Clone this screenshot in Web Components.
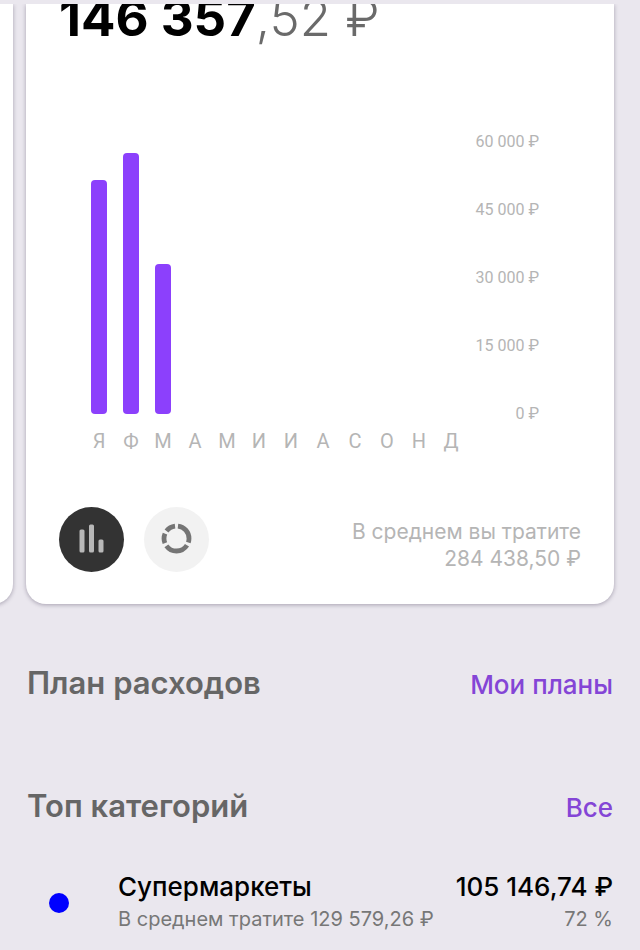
<!DOCTYPE html>
<html lang="ru">
<head>
<meta charset="utf-8">
<meta name="viewport" content="width=device-width, initial-scale=1">
<title>Расходы</title>
<style>
    body {
        margin: 0;
        background-color: #EAE7EE;
        font-family: Inter, "Noto Sans", sans-serif;
        color: #000000;
    }
</style>
</head>
<body>
<expenses-page></expenses-page>

<template id="page-template">
    <style>
        :host {
            display: block;
            padding-top: 4px;
            overflow: hidden;
        }

        .cards {
            display: flex;
            justify-content: flex-end;
            gap: 13px;
            padding: 0 26px 21px;
            overflow: hidden;
        }

        expense-card {
            flex: 0 0 100%;
        }

        main {
            padding: 0 27px;
        }
    </style>
    <div class="cards">
        <expense-card></expense-card>
        <expense-card>
            <money-amount slot="amount" whole="146 357" cents=",52 ₽"></money-amount>
            <bar-chart slot="chart" max="60000" values="51700,57600,33000"></bar-chart>
            <chart-switch slot="switch"></chart-switch>
            <span slot="average">В среднем вы тратите<br>284 438,50 ₽</span>
        </expense-card>
    </div>
    <main>
        <section-head href="#plans">План расходов<span slot="link">Мои планы</span></section-head>
        <section-head href="#categories">Топ категорий<span slot="link">Все</span></section-head>
        <category-row>
            <span slot="name">Супермаркеты</span>
            <span slot="sum">105 146,74 ₽</span>
            <span slot="note">В среднем тратите 129 579,26 ₽</span>
            <span slot="share">72 %</span>
        </category-row>
    </main>
</template>

<template id="card-template">
    <style>
        :host {
            display: flex;
            flex-flow: column nowrap;
            box-sizing: border-box;
            padding-bottom: 32px;
            background-color: #FFFFFF;
            border-radius: 0 0 20px 20px;
            box-shadow: 0 1px 4px rgba(40, 30, 60, 0.35);
        }

        .foot {
            display: flex;
            justify-content: space-between;
            align-items: center;
            margin-top: 53px;
            padding: 0 33px;
        }

        .average {
            margin-top: 12px;
            font-size: 21px;
            line-height: 27px;
            text-align: right;
            color: #B5B5B5;
        }
    </style>
    <slot name="amount"></slot>
    <slot name="chart"></slot>
    <div class="foot">
        <slot name="switch"></slot>
        <div class="average"><slot name="average"></slot></div>
    </div>
</template>

<template id="amount-template">
    <style>
        :host {
            display: flex;
            align-items: flex-end;
            height: 42px;
            padding-left: 33px;
            overflow: hidden;
            font-size: 51px;
            line-height: 56px;
            white-space: nowrap;
        }

        .whole {
            font-weight: 700;
        }

        .cents {
            font-weight: 300;
            color: #6A6A6A;
        }
    </style>
    <span class="whole"></span><span class="cents"></span>
</template>

<template id="chart-template">
    <style>
        :host {
            display: grid;
            grid-template-columns: 1fr 72px;
            margin-top: 86px;
            padding: 0 75px 0 57px;
            font-family: Roboto, sans-serif;
            color: #B5B5B5;
        }

        .bars, .months {
            display: grid;
            grid-template-columns: repeat(12, 1fr);
            justify-items: center;
        }

        .bars {
            height: 272px;
            margin: 10px 0;
            align-items: end;
        }

        .bar {
            width: 16px;
            border-radius: 4px;
            background-color: #8C40FC;
        }

        .months {
            margin-top: 5px;
            font-size: 20px;
            line-height: 24px;
        }

        .axis {
            display: flex;
            flex-flow: column nowrap;
            justify-content: space-between;
            text-align: right;
            font-size: 16px;
            line-height: 20px;
        }
    </style>
    <div class="bars"></div>
    <div class="axis"></div>
    <div class="months"></div>
</template>

<template id="switch-template">
    <style>
        :host {
            display: flex;
            gap: 20px;
        }

        button {
            width: 65px;
            height: 65px;
            padding: 0;
            border: none;
            border-radius: 50%;
            background-color: #F2F2F2;
            color: #757575;
            cursor: pointer;
        }

        button[aria-pressed="true"] {
            background-color: #333333;
            color: #B8B8B8;
        }

        svg {
            display: block;
            margin: auto;
        }
    </style>
    <button type="button" aria-label="Столбцы" aria-pressed="true">
        <svg width="32" height="32" viewBox="0 0 32 32" fill="currentColor">
            <rect x="3.5" y="6.5" width="5" height="23" rx="1.5"/>
            <rect x="13" y="1.5" width="5" height="28" rx="1.5"/>
            <rect x="22.5" y="16.5" width="5" height="13" rx="1.5"/>
        </svg>
    </button>
    <button type="button" aria-label="Круг" aria-pressed="false">
        <svg width="32" height="32" viewBox="0 0 32 32">
            <circle cx="15.5" cy="15.5" r="12.5" fill="none" stroke="currentColor" stroke-width="4.8"
                pathLength="360" stroke-dasharray="0 7 102 14 111 14 45 14 46 7" transform="rotate(-90 15.5 15.5)"/>
        </svg>
    </button>
</template>

<template id="head-template">
    <style>
        :host {
            display: flex;
            justify-content: space-between;
            align-items: baseline;
            height: 40px;
            padding: 38px 0 45px;
            line-height: 40px;
        }

        h2 {
            margin: 0;
            font-size: 31px;
            font-weight: 600;
            color: #666666;
        }

        a {
            font-size: 26px;
            font-weight: 500;
            color: #8445D6;
            text-decoration: none;
        }
    </style>
    <h2><slot></slot></h2>
    <a><slot name="link"></slot></a>
</template>

<template id="row-template">
    <style>
        :host {
            display: grid;
            grid-template-columns: 91px 1fr auto;
            align-items: center;
            line-height: 32px;
            white-space: nowrap;
        }

        .dot {
            grid-row: span 2;
            width: 20px;
            height: 20px;
            margin-left: 22px;
            border-radius: 50%;
            background-color: #0000FF;
        }

        .main {
            font-size: 26px;
            font-weight: 500;
        }

        .small {
            font-size: 20px;
            color: #777777;
        }

        .right {
            text-align: right;
        }
    </style>
    <div class="dot"></div>
    <div class="main"><slot name="name"></slot></div>
    <div class="main right"><slot name="sum"></slot></div>
    <div class="small"><slot name="note"></slot></div>
    <div class="small right"><slot name="share"></slot></div>
</template>

<script>
class TemplateElement extends HTMLElement {
    constructor(id) {
        super();
        this._shadowRoot = this.attachShadow({ mode: 'open' });
        this._shadowRoot.appendChild(document.getElementById(id).content.cloneNode(true));
    }
}

class ExpenseCard extends TemplateElement {
    constructor() {
        super('card-template');
    }
}

class MoneyAmount extends TemplateElement {
    constructor() {
        super('amount-template');
    }

    connectedCallback() {
        this._shadowRoot.querySelector('.whole').textContent = this.getAttribute('whole');
        this._shadowRoot.querySelector('.cents').textContent = this.getAttribute('cents');
    }
}

class BarChart extends TemplateElement {
    constructor() {
        super('chart-template');
        this.$bars = this._shadowRoot.querySelector('.bars');
        this.$axis = this._shadowRoot.querySelector('.axis');
        this.$months = this._shadowRoot.querySelector('.months');
    }

    connectedCallback() {
        const max = Number(this.getAttribute('max'));
        this.getAttribute('values').split(',').forEach((value) => {
            this._add(this.$bars, 'bar').style.height = `${value / max * 100}%`;
        });
        for (let i = 4; i >= 0; i--) {
            const label = String(max / 4 * i).replace(/(\d)(\d{3})$/, '$1 $2');
            this._add(this.$axis, 'tick').textContent = `${label} ₽`;
        }
        for (const month of 'ЯФМАМИИАСОНД') {
            this._add(this.$months, 'month').textContent = month;
        }
    }

    _add(parent, name) {
        const item = document.createElement('div');
        item.className = name;
        parent.appendChild(item);
        return item;
    }
}

class ChartSwitch extends TemplateElement {
    constructor() {
        super('switch-template');
        this.$buttons = this._shadowRoot.querySelectorAll('button');
        this.$buttons.forEach((button) => {
            button.addEventListener('click', this._onClick.bind(this));
        });
    }

    _onClick(event) {
        this.$buttons.forEach((button) => {
            button.setAttribute('aria-pressed', button === event.currentTarget);
        });
    }
}

class SectionHead extends TemplateElement {
    constructor() {
        super('head-template');
    }

    connectedCallback() {
        this._shadowRoot.querySelector('a').href = this.getAttribute('href');
    }
}

class CategoryRow extends TemplateElement {
    constructor() {
        super('row-template');
    }
}

class ExpensesPage extends TemplateElement {
    constructor() {
        super('page-template');
    }
}

customElements.define('expense-card', ExpenseCard);
customElements.define('money-amount', MoneyAmount);
customElements.define('bar-chart', BarChart);
customElements.define('chart-switch', ChartSwitch);
customElements.define('section-head', SectionHead);
customElements.define('category-row', CategoryRow);
customElements.define('expenses-page', ExpensesPage);
</script>
</body>
</html>
